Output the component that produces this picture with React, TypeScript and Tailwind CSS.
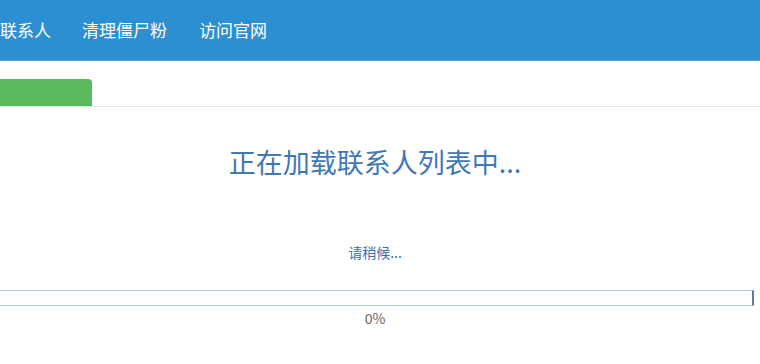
export default function App() {
  const font = { fontFamily: '"Noto Sans CJK SC", "Noto Sans", sans-serif' };
  return (
    <div className="w-[760px] h-[364px] overflow-hidden bg-white" style={font}>
      <div className="h-[61px] bg-[#2c8fd1] flex items-center border-b border-[#5aa6dc]">
        <div className="flex items-center text-[17px] leading-none text-white -mt-[2px]">
          <span>联系人</span>
          <span className="ml-[31px]">清理僵尸粉</span>
          <span className="ml-[32px]">访问官网</span>
        </div>
      </div>
      <div className="pt-[18px] border-b border-[#e3e3e3] flex">
        <div className="w-[92px] h-[27px] bg-[#5cb85c] rounded-tr-[4px]" />
      </div>
      <div className="w-[750px] flex flex-col items-center">
        <div className="mt-[39px] text-[27px] leading-[32px] text-[#3f78b5]">正在加载联系人列表中...</div>
        <div className="mt-[65px] text-[14px] leading-[18px] text-[#3b6fb2]">请稍候...</div>
      </div>
      <div className="mt-[29px] w-[755px] -ml-[1px] h-[16px] border border-[#b9cbde] border-r-[#5a7ea6] border-r-2 bg-[#fbfdff]" />
      <div className="w-[750px] text-center text-[14px] leading-[18px] text-[#666] mt-[3px]">0%</div>
    </div>
  );
}
